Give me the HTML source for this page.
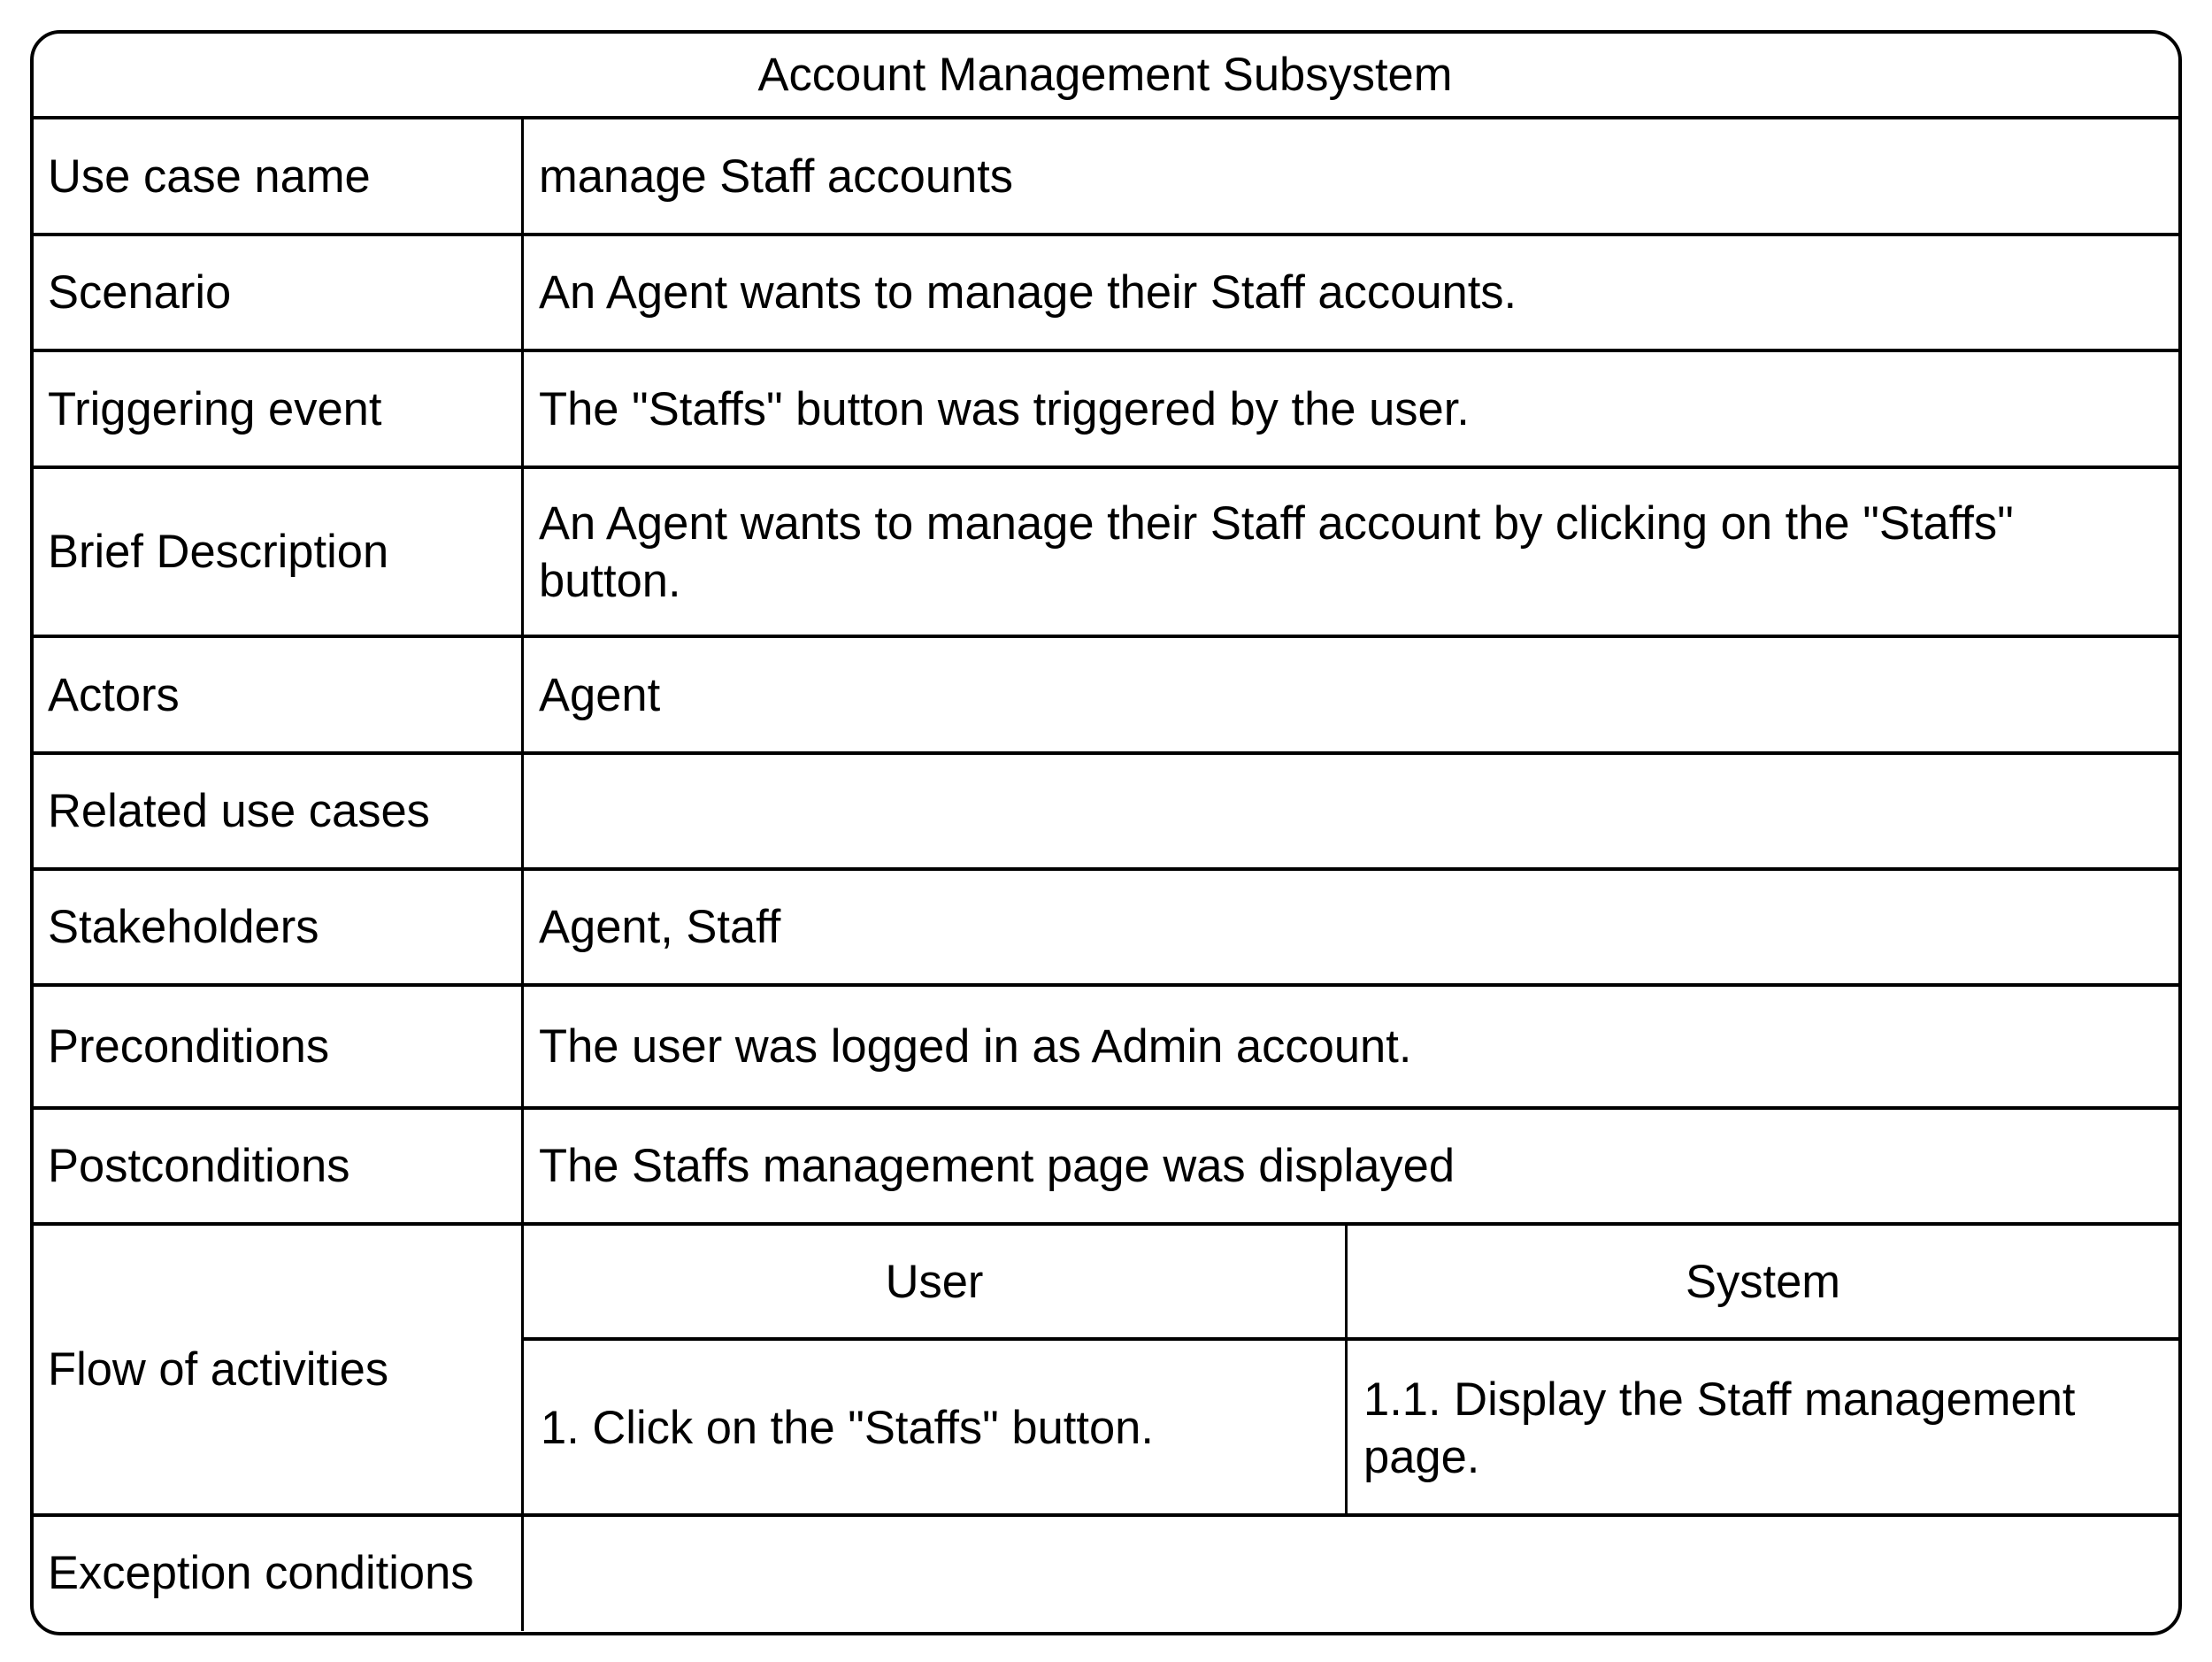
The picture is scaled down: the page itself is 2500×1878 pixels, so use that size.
<!DOCTYPE html>
<html><head><meta charset="utf-8"><style>
html,body{margin:0;padding:0;background:#fff;}
body{width:2500px;height:1878px;position:relative;overflow:hidden;font-family:"Liberation Sans",Arial,sans-serif;color:#000;}
.box{position:absolute;left:34px;top:34px;width:2424px;height:1806px;border:4px solid #000;border-radius:34px;}
.h{position:absolute;height:4px;background:#000;}
.v{position:absolute;width:3px;background:#000;}
.t{position:absolute;font-size:52.5px;line-height:65px;display:flex;align-items:center;white-space:nowrap;}
.c{justify-content:center;}
</style></head><body>
<div class="box"></div>
<div class="h" style="left:36px;width:2426px;top:131px"></div>
<div class="h" style="left:36px;width:2426px;top:263px"></div>
<div class="h" style="left:36px;width:2426px;top:394px"></div>
<div class="h" style="left:36px;width:2426px;top:526px"></div>
<div class="h" style="left:36px;width:2426px;top:717px"></div>
<div class="h" style="left:36px;width:2426px;top:849px"></div>
<div class="h" style="left:36px;width:2426px;top:980px"></div>
<div class="h" style="left:36px;width:2426px;top:1111px"></div>
<div class="h" style="left:36px;width:2426px;top:1250px"></div>
<div class="h" style="left:36px;width:2426px;top:1381px"></div>
<div class="h" style="left:590px;width:1872px;top:1511px"></div>
<div class="h" style="left:36px;width:2426px;top:1710px"></div>
<div class="v" style="left:589px;top:133px;height:1710px"></div>
<div class="v" style="left:1520px;top:1383px;height:329px"></div>

<div class="t c" style="left:36px;width:2426px;top:36px;height:96px">Account Management Subsystem</div>

<div class="t" style="left:54px;top:133px;height:132px">Use case name</div>
<div class="t" style="left:609px;top:133px;height:132px">manage Staff accounts</div>
<div class="t" style="left:54px;top:265px;height:131px">Scenario</div>
<div class="t" style="left:609px;top:265px;height:131px">An Agent wants to manage their Staff accounts.</div>
<div class="t" style="left:54px;top:396px;height:132px">Triggering event</div>
<div class="t" style="left:609px;top:396px;height:132px">The "Staffs" button was triggered by the user.</div>
<div class="t" style="left:54px;top:528px;height:191px">Brief Description</div>
<div class="t" style="left:609px;top:528px;height:191px">An Agent wants to manage their Staff account by clicking on the "Staffs"<br>button.</div>
<div class="t" style="left:54px;top:719px;height:132px">Actors</div>
<div class="t" style="left:609px;top:719px;height:132px">Agent</div>
<div class="t" style="left:54px;top:851px;height:131px">Related use cases</div>
<div class="t" style="left:54px;top:982px;height:131px">Stakeholders</div>
<div class="t" style="left:609px;top:982px;height:131px">Agent, Staff</div>
<div class="t" style="left:54px;top:1113px;height:139px">Preconditions</div>
<div class="t" style="left:609px;top:1113px;height:139px">The user was logged in as Admin account.</div>
<div class="t" style="left:54px;top:1252px;height:131px">Postconditions</div>
<div class="t" style="left:609px;top:1252px;height:131px">The Staffs management page was displayed</div>
<div class="t" style="left:54px;top:1383px;height:329px">Flow of activities</div>
<div class="t c" style="left:592px;width:928px;top:1383px;height:130px">User</div>
<div class="t c" style="left:1523px;width:939px;top:1383px;height:130px">System</div>
<div class="t" style="left:611px;top:1515px;height:197px">1. Click on the "Staffs" button.</div>
<div class="t" style="left:1541px;top:1515px;height:197px">1.1. Display the Staff management<br>page.</div>
<div class="t" style="left:54px;top:1712px;height:130px">Exception conditions</div>
</body></html>
